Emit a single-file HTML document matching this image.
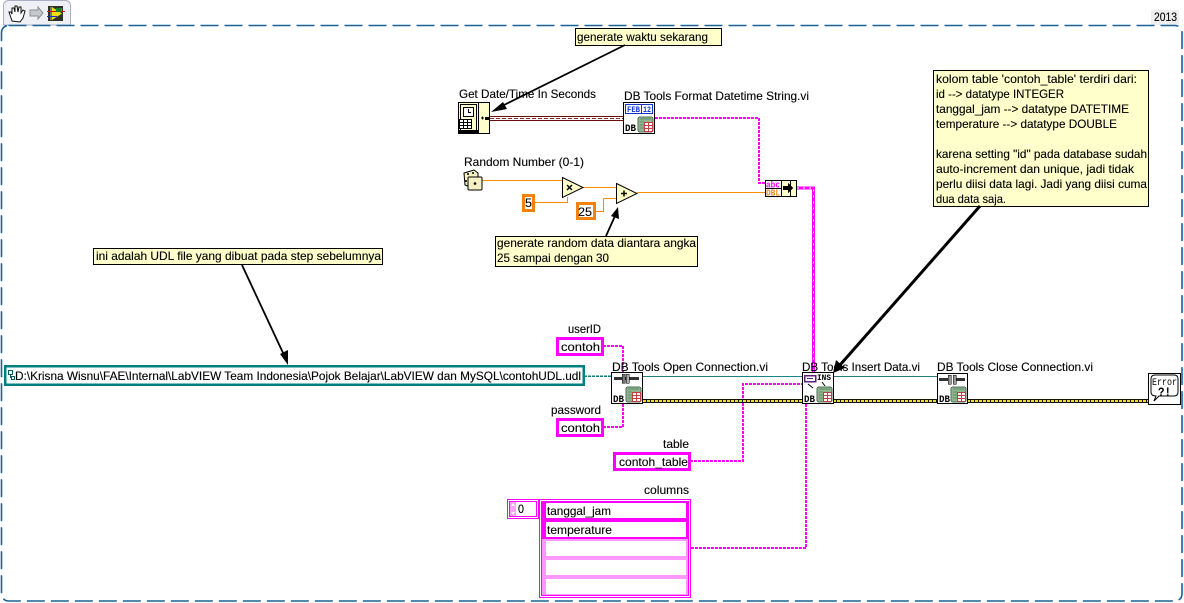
<!DOCTYPE html>
<html><head><meta charset="utf-8"><style>
html,body{margin:0;padding:0;background:#fff;width:1184px;height:603px;overflow:hidden}
svg{display:block}
text{font-family:"Liberation Sans",sans-serif;font-size:12px;fill:#000;stroke:#000;stroke-width:.12px;white-space:pre}
.m{font-family:"Liberation Mono",monospace;font-weight:bold;stroke:none}
</style></head><body>
<svg width="1184" height="603" viewBox="0 0 1184 603" xmlns="http://www.w3.org/2000/svg" shape-rendering="crispEdges">
<!-- toolbar tab -->
<path d="M3.500 25V6Q3.500 .5 9 .5H65Q70.500 .5 70.500 6V25Z" fill="#eff0f6" stroke="#a9aec4" shape-rendering="auto"/>
<g shape-rendering="auto">
<path d="M12 21l-2-6-1-3 2 0 1 2 0-6 2 0 1 4 0-6 2 0 1 6 1-5 2 0 0 6 2-3 2 1-2 7-3 4z" fill="#fff" stroke="#111" stroke-width="1"/>
<path d="M30 10h8V7l5 6-5 6v-3h-8z" fill="#c5c8cc" stroke="#8c9096"/>
</g>
<rect x="48" y="6" width="15" height="15" fill="#2f3028"/>
<path d="M50 7H52V20H50ZM60 8H62V12H60Z" fill="#777"/>
<path d="M52 7L62 13.500L52 20Z" fill="#f0dc10" shape-rendering="auto"/>
<rect x="47" y="11" width="18" height="1" fill="#d01010"/>
<rect x="47" y="16" width="10" height="1" fill="#1030d0"/>
<rect x="56" y="8" width="5" height="4" fill="#1f7a25"/>
<!-- year tab -->
<rect x="1151" y="10" width="28" height="15" fill="#eeeeee"/>
<text x="1154" y="21" textLength="23" lengthAdjust="spacingAndGlyphs">2013</text>
<!-- frame -->
<rect x="1.500" y="25.500" width="1180.500" height="575.500" rx="7" fill="none" stroke="#1b6296" stroke-width="1.600" stroke-dasharray="18 6" shape-rendering="auto"/>

<!-- wires -->
<g fill="none">
<rect x="490" y="116" width="133" height="5" fill="#fff"/>
<path d="M490 116.500H623M490 120.500H623" stroke="#6e0f0f"/>
<path d="M490 118.500H623" stroke="#8c3030" stroke-dasharray="4 2"/>
<path d="M655 118H759V183H765" stroke="#f0f" stroke-width="2" stroke-dasharray="3 1"/>
<path d="M797 188H813.500V372" stroke="#f0f" stroke-width="3"/>
<path d="M797 188H813.500V372" stroke="#fff" stroke-width="1" stroke-dasharray="2 4"/>
<g stroke="#ff8c00">
<path d="M482 180.500H562M583 187.500H616M637 192.500H765"/>
<path d="M535 202.500H567.500V197M595 211.500H603.500V198.500H616"/>
</g>
<path d="M584 376H612" stroke="#008080" stroke-dasharray="3 1" stroke-width="1.500"/>
<path d="M643 376.500H802M833 376.500H937" stroke="#1f8080"/>
<g stroke="#f0f" stroke-width="2" stroke-dasharray="3 1">
<path d="M603 346H623V372M603 427H623V404"/>
<path d="M690 461H743V384H802"/>
<path d="M691 548H806V404"/>
</g>
<g>
<rect x="643" y="399" width="159" height="4" fill="#151505"/>
<rect x="833" y="399" width="104" height="4" fill="#151505"/>
<rect x="967" y="399" width="181" height="4" fill="#151505"/>
<path d="M643 401H802M833 401H937M967 401H1148" stroke="#e8e020" stroke-width="2" stroke-dasharray="3 1"/>
</g>
</g>
<rect x="812" y="372" width="4" height="3" fill="#f01020"/>

<!-- Get Date/Time icon -->
<rect x="458.500" y="102.500" width="31" height="31" fill="#ffffcc" stroke="#000"/>
<path d="M478.500 103V133" stroke="#000"/>
<path d="M460.500 104.500H476.500V130.500H460.500Z" fill="#ffffcc" stroke="#000"/>
<rect x="463.500" y="107.500" width="10" height="9" fill="#fff" stroke="#000"/>
<path d="M468.500 109V112.500H471" stroke="#000" fill="none"/>
<rect x="459.500" y="119.500" width="12" height="9" fill="#fff" stroke="#000"/>
<path d="M459 122.500H472M459 125.500H472M463.500 119V128M467.500 119V128" stroke="#000"/>
<rect x="459" y="130" width="19" height="3" fill="#000"/>
<path d="M481 118H484M482.500 116.500V119.500" stroke="#000"/><rect x="485" y="117" width="4" height="3" fill="#000"/>
<text x="459" y="98" textLength="137" lengthAdjust="spacingAndGlyphs">Get Date/Time In Seconds</text>

<!-- Format icon -->
<rect x="623.500" y="102.500" width="31" height="31" fill="#fff" stroke="#000"/>
<rect x="625.500" y="104.500" width="27" height="9" fill="#fff" stroke="#1030d0"/>
<text class="m" x="627" y="112" style="font-size:8px;fill:#1030d0" textLength="13" lengthAdjust="spacingAndGlyphs">FEB</text>
<text class="m" x="643" y="112" style="font-size:8px;fill:#1030d0" textLength="8" lengthAdjust="spacingAndGlyphs">12</text>
<path d="M641.500 105V113" stroke="#1030d0"/>
<rect x="638" y="117" width="15" height="15" rx="2" fill="#8fb58f" stroke="#50705a"/><path d="M640 119H651M640 122H644M640 125H644M640 128H644" stroke="#5f8f6c"/><rect x="644.500" y="122.500" width="8" height="9" fill="#fff" stroke="#c04040"/><path d="M644 125.500H653M644 128.500H653M648.500 122V132" stroke="#c04040"/>
<text class="m" x="625" y="131" style="font-size:10px;fill:#000" textLength="11" lengthAdjust="spacingAndGlyphs">DB</text>
<text x="624" y="100" textLength="185" lengthAdjust="spacingAndGlyphs">DB Tools Format Datetime String.vi</text>

<!-- Random -->
<text x="464" y="166" textLength="120" lengthAdjust="spacingAndGlyphs">Random Number (0-1)</text>
<g shape-rendering="auto">
<path d="M464 173l10-3 4 3v6l-4 1v6l-4 1-5-2z" fill="#f5efc4" stroke="#000"/>
<rect x="468" y="177" width="14" height="13" rx="1" fill="#f5efc4" stroke="#000"/>
<circle cx="475" cy="183.500" r="1.300" fill="#000"/><circle cx="468" cy="174" r="1" fill="#000"/><circle cx="473" cy="173" r="1" fill="#000"/><circle cx="466" cy="181" r="1" fill="#000"/>
<!-- triangles -->
<path d="M562.500 177.500L583 187.500L562.500 197.500Z" fill="#ffffcc" stroke="#000"/>
<path d="M616.500 183.500L637 193.500L616.500 203.500Z" fill="#ffffcc" stroke="#000"/>
<path d="M567 185l5 5M572 185l-5 5M621 193.500h6M624 190.500v6" stroke="#000" stroke-width="1.500"/>
</g>
<rect x="523.500" y="195.500" width="10" height="15" fill="#fff" stroke="#f5820d" stroke-width="3"/>
<text x="525" y="207" textLength="7" lengthAdjust="spacingAndGlyphs">5</text>
<rect x="577.500" y="203.500" width="17" height="15" fill="#fff" stroke="#f5820d" stroke-width="3"/>
<text x="578" y="216" textLength="14" lengthAdjust="spacingAndGlyphs">25</text>

<!-- build array -->
<rect x="765.500" y="180.500" width="31" height="16" fill="#ffffcc" stroke="#000"/>
<rect x="766" y="181" width="15" height="7" fill="#fff"/><rect x="766" y="189" width="15" height="7" fill="#fff"/>
<path d="M766 188.500H781M781.500 181V196M790.500 181V196" stroke="#000"/>
<text class="m" x="766" y="187.500" style="font-size:9px;fill:#f0f" textLength="14" lengthAdjust="spacingAndGlyphs">abc</text>
<text class="m" x="766" y="195.500" style="font-size:9px;fill:#f08a10" textLength="14" lengthAdjust="spacingAndGlyphs">DBL</text>
<path d="M783 186h5v-3l5 5-5 5v-3h-5z" fill="#000"/>

<!-- String controls -->
<rect x="5" y="366" width="578.500" height="18.500" fill="#fff" stroke="#008080" stroke-width="2.500"/>
<path d="M8.500 370.500h4v4h-4zM10.500 374.500v3h1M11.500 376.500h3v3h-3z" fill="none" stroke="#006060"/>
<text x="15" y="380" textLength="566" lengthAdjust="spacingAndGlyphs">D:\Krisna Wisnu\FAE\Internal\LabVIEW Team Indonesia\Pojok Belajar\LabVIEW dan MySQL\contohUDL.udl</text>

<text x="568" y="333" textLength="33" lengthAdjust="spacingAndGlyphs">userID</text>
<rect x="557.500" y="338.500" width="45" height="16" fill="#fff" stroke="#f0f" stroke-width="3"/>
<text x="561" y="351" textLength="39" lengthAdjust="spacingAndGlyphs">contoh</text>
<text x="551" y="414" textLength="50" lengthAdjust="spacingAndGlyphs">password</text>
<rect x="557.500" y="419.500" width="45" height="16" fill="#fff" stroke="#f0f" stroke-width="3"/>
<text x="561" y="432" textLength="39" lengthAdjust="spacingAndGlyphs">contoh</text>
<text x="663" y="448" textLength="26" lengthAdjust="spacingAndGlyphs">table</text>
<rect x="614.500" y="453.500" width="75" height="16" fill="#fff" stroke="#f0f" stroke-width="3"/>
<text x="619" y="466" textLength="69" lengthAdjust="spacingAndGlyphs">contoh_table</text>

<!-- Open -->
<rect x="611.500" y="372.500" width="31" height="31" fill="#fff" stroke="#000"/>
<rect x="614" y="377" width="25" height="3" fill="#333"/>
<rect x="622" y="374" width="3" height="9" fill="#777" stroke="#000" stroke-width=".5"/><rect x="626" y="374" width="3" height="9" fill="#aaa" stroke="#000" stroke-width=".5"/>
<rect x="626" y="387" width="15" height="15" rx="2" fill="#8fb58f" stroke="#50705a"/><path d="M628 389H639M628 392H632M628 395H632M628 398H632" stroke="#5f8f6c"/><rect x="632.500" y="392.500" width="8" height="9" fill="#fff" stroke="#c04040"/><path d="M632 395.500H641M632 398.500H641M636.500 392V402" stroke="#c04040"/>
<text class="m" x="613" y="402" style="font-size:10px;fill:#000" textLength="11" lengthAdjust="spacingAndGlyphs">DB</text>
<text x="612" y="371" textLength="156" lengthAdjust="spacingAndGlyphs">DB Tools Open Connection.vi</text>

<!-- Insert -->
<rect x="802.500" y="372.500" width="31" height="31" fill="#fff" stroke="#000"/>
<rect x="804.500" y="375.500" width="11" height="6" fill="#fff" stroke="#602080" stroke-width="1.500"/>
<path d="M807 378.500h6" stroke="#602080"/>
<g shape-rendering="auto"><path d="M808 384l5 4M822 382l3 4" stroke="#000"/></g>
<text class="m" x="817" y="380" style="font-size:8px;fill:#000" textLength="14" lengthAdjust="spacingAndGlyphs">INS</text>
<rect x="817" y="387" width="15" height="15" rx="2" fill="#8fb58f" stroke="#50705a"/><path d="M819 389H830M819 392H823M819 395H823M819 398H823" stroke="#5f8f6c"/><rect x="823.500" y="392.500" width="8" height="9" fill="#fff" stroke="#c04040"/><path d="M823 395.500H832M823 398.500H832M827.500 392V402" stroke="#c04040"/>
<text class="m" x="804" y="402" style="font-size:10px;fill:#000" textLength="11" lengthAdjust="spacingAndGlyphs">DB</text>
<text x="802" y="371" textLength="118" lengthAdjust="spacingAndGlyphs">DB Tools Insert Data.vi</text>

<!-- Close -->
<rect x="937.500" y="373.500" width="30" height="30" fill="#fff" stroke="#000"/>
<rect x="939" y="378" width="9" height="3" fill="#333"/><rect x="956" y="378" width="9" height="3" fill="#333"/>
<rect x="948" y="375" width="3" height="9" fill="#999" stroke="#000" stroke-width=".5"/><rect x="953" y="375" width="3" height="9" fill="#999" stroke="#000" stroke-width=".5"/>
<rect x="951" y="387" width="15" height="15" rx="2" fill="#8fb58f" stroke="#50705a"/><path d="M953 389H964M953 392H957M953 395H957M953 398H957" stroke="#5f8f6c"/><rect x="957.500" y="392.500" width="8" height="9" fill="#fff" stroke="#c04040"/><path d="M957 395.500H966M957 398.500H966M961.500 392V402" stroke="#c04040"/>
<text class="m" x="939" y="402" style="font-size:10px;fill:#000" textLength="11" lengthAdjust="spacingAndGlyphs">DB</text>
<text x="937" y="371" textLength="156" lengthAdjust="spacingAndGlyphs">DB Tools Close Connection.vi</text>

<!-- Error -->
<rect x="1148.500" y="373.500" width="32" height="31" fill="#fff" stroke="#000"/>
<path d="M1155 375h19q4 0 4 4v13q0 4-4 4h-15l-5 5 2-5q-5 0-5-4v-13q0-4 4-4z" fill="#fff" stroke="#000" shape-rendering="auto"/>
<text class="m" x="1152" y="385" style="font-size:10px;font-weight:normal;fill:#000" textLength="25" lengthAdjust="spacingAndGlyphs">Error</text>
<text class="m" x="1158" y="396" style="font-size:13px;fill:#000" textLength="13" lengthAdjust="spacingAndGlyphs">?!</text>

<!-- Array -->
<text x="644" y="494" textLength="45" lengthAdjust="spacingAndGlyphs">columns</text>
<rect x="507.500" y="499.500" width="31" height="19" fill="#fff" stroke="#f0f"/>
<rect x="509.500" y="501.500" width="27" height="15" fill="#fff" stroke="#f0f"/>
<rect x="510" y="502" width="6" height="14" fill="#f9a0f9"/>
<path d="M513 503l-2 3h4zM513 515l-2-3h4z" fill="#fff"/>
<text x="518" y="513" textLength="6" lengthAdjust="spacingAndGlyphs">0</text>
<rect x="539.500" y="499.500" width="151" height="98" fill="#fff" stroke="#f0f"/>
<rect x="541.500" y="501.500" width="147" height="94" fill="#fff" stroke="#f0f"/>
<rect x="542" y="502" width="146" height="37" fill="#f0f"/>
<rect x="542" y="539" width="146" height="56" fill="#ff99ff"/>
<rect x="546" y="503" width="140" height="15" fill="#fff"/>
<rect x="546" y="522" width="140" height="15" fill="#fff"/>
<rect x="546" y="541" width="140" height="15" fill="#fff"/>
<rect x="546" y="560" width="140" height="15" fill="#fff"/>
<rect x="546" y="579" width="140" height="15" fill="#fff"/>
<text x="547" y="515" textLength="64" lengthAdjust="spacingAndGlyphs">tanggal_jam</text>
<text x="547" y="534" textLength="65" lengthAdjust="spacingAndGlyphs">temperature</text>

<!-- Notes -->
<rect x="575.500" y="28.500" width="146" height="17" fill="#ffffcc" stroke="#000"/>
<text x="577" y="41" textLength="131" lengthAdjust="spacingAndGlyphs">generate waktu sekarang</text>

<rect x="495.500" y="236.500" width="202" height="30" fill="#ffffcc" stroke="#000"/>
<text x="497" y="247" textLength="199" lengthAdjust="spacingAndGlyphs">generate random data diantara angka</text>
<text x="497" y="262" textLength="112" lengthAdjust="spacingAndGlyphs">25 sampai dengan 30</text>

<rect x="93.500" y="248.500" width="289" height="16" fill="#ffffcc" stroke="#000"/>
<text x="96" y="260" textLength="285" lengthAdjust="spacingAndGlyphs">ini adalah UDL file yang dibuat pada step sebelumnya</text>

<rect x="933.500" y="70.500" width="215" height="136" fill="#ffffcc" stroke="#000"/>
<text x="936" y="83" textLength="201" lengthAdjust="spacingAndGlyphs">kolom table 'contoh_table' terdiri dari:</text>
<text x="936" y="98" textLength="128" lengthAdjust="spacingAndGlyphs">id --&gt; datatype INTEGER</text>
<text x="936" y="113" textLength="193" lengthAdjust="spacingAndGlyphs">tanggal_jam --&gt; datatype DATETIME</text>
<text x="936" y="128" textLength="181" lengthAdjust="spacingAndGlyphs">temperature --&gt; datatype DOUBLE</text>
<text x="936" y="158" textLength="211" lengthAdjust="spacingAndGlyphs">karena setting "id" pada database sudah</text>
<text x="936" y="173" textLength="198" lengthAdjust="spacingAndGlyphs">auto-increment dan unique, jadi tidak</text>
<text x="936" y="188" textLength="211" lengthAdjust="spacingAndGlyphs">perlu diisi data lagi. Jadi yang diisi cuma</text>
<text x="936" y="203" textLength="70" lengthAdjust="spacingAndGlyphs">dua data saja.</text>

<!-- Arrows -->
<g shape-rendering="auto" fill="#000" stroke="#000" stroke-linejoin="miter">
<path d="M625 45L500 107" stroke-width="1.800" fill="none"/>
<path d="M491 112L503 102L507 109Z" stroke="none"/>
<path d="M606 236L615 216" stroke-width="1.800" fill="none"/>
<path d="M618 207L619 219L611 216Z" stroke="none"/>
<path d="M242 265L284 355" stroke-width="1.800" fill="none"/>
<path d="M288 365L280 354L288 350Z" stroke="none"/>
<path d="M980 206L840 365" stroke-width="3" fill="none"/>
<path d="M833 373L836 360L845 368Z" stroke="none"/>
</g>
</svg>
</body></html>
